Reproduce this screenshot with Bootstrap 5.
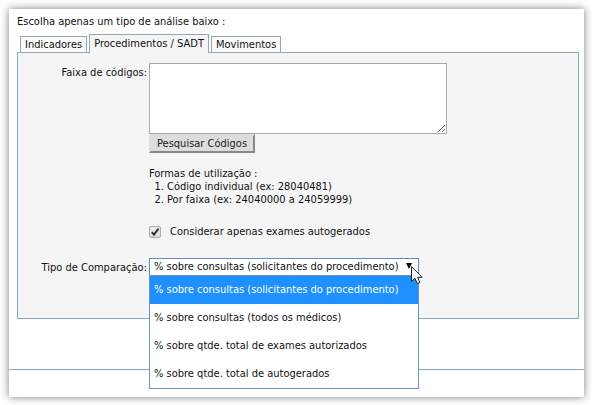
<!DOCTYPE html>
<html lang="pt-BR">
<head>
<meta charset="utf-8">
<meta name="viewport" content="width=device-width, initial-scale=1">
<title>Tipo de análise</title>
<link href="https://cdn.jsdelivr.net/npm/bootstrap@5.3.0/dist/css/bootstrap.min.css" rel="stylesheet">
<style>
:root { --line: #8ea8ba; }
body { font: 11px/13px "DejaVu Sans Condensed", "Noto Sans", sans-serif; color: #111; background: #fff; }
button, select, textarea { font: inherit; }
.sheet { margin: 9px 8px 8px 9px; background: #fff; box-shadow: 0 0 8px rgba(0,0,0,.5); }
.sheet-main { padding: 6px 5px 50px 8px; }
.intro { margin-bottom: 6px; }
.analysis-tabs { border: 0; gap: 2px; padding-left: 3px; align-items: flex-end; }
.analysis-tabs .nav-link { color: #111; border: 1px solid var(--line); border-bottom: 0; border-radius: 0; margin: 0; padding: 1px 4px; background: #fafafa; line-height: 14px; }
.analysis-tabs .nav-link:not(.active) { line-height: 13px; }
.analysis-tabs .nav-link.active { position: relative; z-index: 1; padding: 2px 4px; color: #111; background: #f5f5f5; border-color: var(--line); margin-bottom: -1px; }
.panel { border: 1px solid var(--line); background: #f5f5f5; padding: 10px 4px 42px 0; }
.form-line { display: grid; grid-template-columns: 129px 1fr; column-gap: 2px; }
.form-line > label { text-align: right; padding-top: 3px; white-space: nowrap; }
.codes { width: 298px; height: 71px; border: 1px solid #a9a9a9; background: #fff; padding: 2px; resize: both; display: block; }
.search-btn { border: 2px solid; border-color: #dedede #888 #888 #dedede; border-radius: 0; background: #ddd; color: #222; padding: 1px 6px; line-height: 13px; font-size: 11px; display: block; }
.usage { margin-top: 14px; }
.usage ol { margin: 0; padding-left: 18px; }
.option { margin: 19px 0 20px; }
.option input { appearance: none; width: 12px; height: 12px; margin: 0 9px 0 0; border: 1px solid #aaa; border-radius: 2px; background: linear-gradient(#eee, #ddd); }
.option input:checked { background: url("data:image/svg+xml,%3Csvg xmlns='http://www.w3.org/2000/svg' viewBox='0 0 10 10'%3E%3Cpath d='M1.8 5.1l2.2 2.5L8.5 1.7' fill='none' stroke='%23333' stroke-width='2'/%3E%3C/svg%3E"), linear-gradient(#eee, #ddd); }
.combo { position: relative; width: 270px; }
.combo select { appearance: none; display: block; width: 100%; height: 18px; border: 1px solid #5b8bd0; border-radius: 0; background: #fff; color: #111; padding: 0 20px 0 4px; outline: 0; line-height: 16px; }
.combo-arrow { position: absolute; right: 7px; top: 5px; }
.combo-list { position: absolute; top: 17px; left: 0; right: 0; border: 1px solid #6c93bb; border-radius: 0; background: #fff; z-index: 2; }
.combo-list .list-group-item { border: 0; border-radius: 0; padding: 7px 4px; line-height: 14px; color: #111; text-align: left; background: #fff; white-space: nowrap; }
.combo-list .list-group-item.active { background: #1e90ff; color: #fff; margin: 0; }
.pointer { position: absolute; left: 261px; top: 7px; z-index: 3; pointer-events: none; }
.sheet-foot { border-top: 1px solid var(--line); height: 28px; }
</style>
</head>
<body>
<main class="sheet">
  <div class="sheet-main">
    <p class="intro">Escolha apenas um tipo de análise baixo :</p>
    <ul class="nav nav-tabs analysis-tabs" role="tablist">
      <li class="nav-item"><button class="nav-link" type="button" role="tab">Indicadores</button></li>
      <li class="nav-item"><button class="nav-link active" type="button" role="tab" aria-selected="true">Procedimentos / SADT</button></li>
      <li class="nav-item"><button class="nav-link" type="button" role="tab">Movimentos</button></li>
    </ul>
    <form class="panel">
      <div class="form-line">
        <label for="codes">Faixa de códigos:</label>
        <div>
          <textarea class="codes" id="codes"></textarea>
          <button class="search-btn" type="button">Pesquisar Códigos</button>
          <div class="usage">Formas de utilização :
            <ol>
              <li>Código individual (ex: 28040481)</li>
              <li>Por faixa (ex: 24040000 a 24059999)</li>
            </ol>
          </div>
          <div class="option d-flex align-items-center">
            <input type="checkbox" id="auto" checked>
            <label for="auto">Considerar apenas exames autogerados</label>
          </div>
        </div>
      </div>
      <div class="form-line">
        <label for="compare">Tipo de Comparação:</label>
        <div class="combo">
          <select id="compare">
            <option>% sobre consultas (solicitantes do procedimento)</option>
            <option>% sobre consultas (todos os médicos)</option>
            <option>% sobre qtde. total de exames autorizados</option>
            <option>% sobre qtde. total de autogerados</option>
          </select>
          <svg class="combo-arrow" width="6" height="6" viewBox="0 0 6 6" aria-hidden="true"><path d="M0 0h6L3 6z" fill="#000"/></svg>
          <div class="list-group combo-list">
            <button type="button" class="list-group-item active">% sobre consultas (solicitantes do procedimento)</button>
            <button type="button" class="list-group-item">% sobre consultas (todos os médicos)</button>
            <button type="button" class="list-group-item">% sobre qtde. total de exames autorizados</button>
            <button type="button" class="list-group-item">% sobre qtde. total de autogerados</button>
          </div>
          <svg class="pointer" width="13" height="20" viewBox="0 0 13 20" aria-hidden="true"><path d="M1.5 1.5v15l3.4-3.2 2.4 5.3 2.6-1.1-2.3-5.2h4.6z" fill="#fff" stroke="#222"/></svg>
        </div>
      </div>
    </form>
  </div>
  <div class="sheet-foot"></div>
</main>
<script src="https://cdn.jsdelivr.net/npm/bootstrap@5.3.0/dist/js/bootstrap.bundle.min.js"></script>
</body>
</html>
